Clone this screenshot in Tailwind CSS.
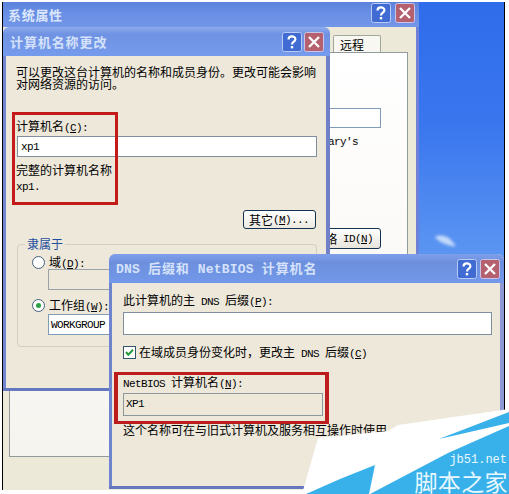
<!DOCTYPE html>
<html lang="zh-CN">
<head>
<meta charset="utf-8">
<title>计算机名称更改</title>
<script src="https://cdn.jsdelivr.net/npm/@tailwindcss/browser@4"></script>
</head>
<body class="w-[509px] h-[494px] overflow-hidden bg-white">
<svg class="hidden">
  <symbol id="help" viewBox="0 0 20 20"><rect x=".5" y=".5" width="19" height="19" rx="2" fill="#3f6bd3" stroke="#b9cbf5"/><path d="M6.5 7.6C6.5 3.4 13.4 3.5 13.4 7.2C13.4 9.6 10 9.6 10 12.4" fill="none" stroke="#fff" stroke-width="2.2"/><rect x="8.8" y="14" width="2.4" height="2.4" fill="#fff"/></symbol>
  <symbol id="close" viewBox="0 0 20 20"><rect x=".5" y=".5" width="19" height="19" rx="2" fill="#b4606e" stroke="#c9c4e8"/><path d="M5 5L15 15M15 5L5 15" fill="none" stroke="#fff" stroke-width="2.3"/></symbol>
</svg>
<div class="relative w-[509px] h-[494px] overflow-hidden text-black text-[12px] leading-[12px] whitespace-nowrap font-['Noto_Sans_CJK_SC',sans-serif]">

  <!-- desktop -->
  <div class="absolute left-[2px] top-[2px] w-[503px] h-[409px] border-r border-black bg-linear-to-b from-[#2f6ceb] via-[#3a76ee] via-30% to-[#5f98f2] to-65%">
    <svg class="absolute left-[428px] top-[228px] w-[32px] h-[22px] blur-[1.5px]" viewBox="0 0 32 22"><path d="M5 7C9 4 18 6 21 10L26 16C20 17 8 12 5 7Z" fill="#c3dafa"/></svg>
  </div>

  <!-- system properties -->
  <section class="absolute left-[2px] top-[2px] w-[417px] h-[488px] border-l border-black bg-[#ece9d8] flex flex-col">
    <header class="h-[25px] shrink-0 flex items-center pl-[5px] pr-[4px] gap-[4px] bg-linear-to-b from-[#5c83db] via-[#6a90e6] to-[#7396e8]">
      <h1 class="flex-1 text-[13px] tracking-[0.7px] font-bold text-[#dbe6fb]">系统属性</h1>
      <svg class="size-[20px] mb-[3px]"><use href="#help"/></svg>
      <svg class="size-[20px] mb-[3px]"><use href="#close"/></svg>
    </header>
    <div class="flex-1 flex flex-col pl-[6px] pr-[8px] pt-[8px] border-r-[3px] border-[#7080d8]">
      <div class="flex justify-end pr-[27px] h-[17px]">
        <div class="w-[48px] border border-b-0 border-[#a3a89c] rounded-t-[2px] bg-[#f8f7f1] pl-[6px] pt-[3px]">远程</div>
      </div>
      <div class="h-[405px] border border-[#919b9c] bg-linear-to-b from-white to-[#f6f4ef] flex flex-col items-end pr-[26px] pt-[55px]">
        <div class="w-[120px] h-[20px] border border-[#7f9db9] bg-white"></div>
        <div class="mt-[8px] mr-[23px] h-[12px] font-['Liberation_Mono',monospace] text-[11px] tracking-[-0.6px]">primary's</div>
        <div class="mt-[80px] w-[100px] h-[21px] border border-[#12324f] rounded-[3px] bg-linear-to-b from-white to-[#e6e4db] flex items-center justify-end pr-[7px]">网络&nbsp;<span class="pl-[3px] font-['Liberation_Mono',monospace] text-[11px] tracking-[-0.6px]">ID(<u>N</u>)</span></div>
      </div>
    </div>
  </section>

  <!-- computer name changes -->
  <section class="absolute left-[3px] top-[27px] w-[327px] h-[364px] rounded-t-[6px] bg-[#ece9d8] border-b-[3px] border-[#6477bf] flex flex-col overflow-hidden">
    <header class="h-[29px] shrink-0 flex items-center pl-[7px] pr-[6px] gap-[2px] bg-linear-to-b from-[#8dabee] via-[#7092e2] via-25% to-[#759bed]">
      <h2 class="flex-1 text-[13px] tracking-[0.9px] font-bold text-[#d5e2fa]">计算机名称更改</h2>
      <svg class="size-[20px] mt-px"><use href="#help"/></svg>
      <svg class="size-[20px] mt-px"><use href="#close"/></svg>
    </header>
    <div class="flex-1 border-l-[3px] border-r-[4px] border-l-[#7187d2] border-r-[#7080c8] pl-[10px] pr-[9px] pt-[10px] bg-[#ede8da]">
      <p class="h-[24px]">可以更改这台计算机的名称和成员身份。更改可能会影响<br>对网络资源的访问。</p>
      <label class="block h-[12px] mt-[30px]">计算机名<span class="font-['Liberation_Mono',monospace] text-[11px] leading-[10px] tracking-[-0.6px]">(<u>C</u>):</span></label>
      <div class="mt-[4px] ml-px w-[300px] h-[21px] border border-[#7f8f9f] bg-white pl-[3px] pt-[4px] font-['Liberation_Mono',monospace] text-[11px] tracking-[-0.6px]">xp1</div>
      <p class="mt-[7px] h-[12px]">完整的计算机名称</p>
      <p class="mt-[5px] h-[12px] font-['Liberation_Mono',monospace] text-[11px] tracking-[-0.6px]">xp1.</p>
      <div class="mt-[17px] ml-[227px] w-[73px] h-[19px] border border-[#12324f] rounded-[3px] bg-linear-to-b from-white to-[#ebe9e0] flex items-center pl-[5px]">其它<span class="font-['Liberation_Mono',monospace] text-[11px] tracking-[-0.6px]">(<u>M</u>)...</span></div>
      <fieldset class="mt-[9px] ml-px w-[300px] h-[109px] border border-[#d0d0bf] rounded-[4px] pl-[14px]">
        <legend class="ml-[-7px] px-[2px] h-[12px] text-[#1d4f9f]">隶属于</legend>
        <div class="flex items-center gap-[4px] h-[13px] mt-[6px]"><span class="size-[13px] rounded-full border border-[#47617c] bg-white"></span><span>域<span class="font-['Liberation_Mono',monospace] text-[11px] leading-[10px] tracking-[-0.6px]">(<u>D</u>):</span></span></div>
        <div class="ml-[16px] w-[260px] h-[21px] border border-[#9aa4a8]"></div>
        <div class="flex items-center gap-[4px] h-[13px] mt-[9px]"><span class="size-[13px] rounded-full border border-[#47617c] bg-white flex items-center justify-center"><span class="size-[5px] rounded-full bg-[#2fa046]"></span></span><span>工作组<span class="font-['Liberation_Mono',monospace] text-[11px] leading-[10px] tracking-[-0.6px]">(<u>W</u>):</span></span></div>
        <div class="ml-[16px] mt-[2px] w-[260px] h-[21px] border border-[#7f9db9] bg-white pl-[2px] pt-[4px] font-['Liberation_Mono',monospace] text-[11px] tracking-[-0.6px]">WORKGROUP</div>
      </fieldset>
    </div>
  </section>
  <div class="absolute left-[12px] top-[112px] w-[106px] h-[93px] border-[3px] border-[#c41a1a]"></div>

  <!-- DNS suffix and NetBIOS name -->
  <section class="absolute left-[109px] top-[254px] w-[395px] h-[235px] rounded-t-[6px] border-b-[3px] border-[#6477bf] bg-[#ede8da] flex flex-col overflow-hidden">
    <header class="h-[29px] shrink-0 flex items-center pl-[7px] pr-[4px] gap-[3px] bg-linear-to-b from-[#7f9fea] via-[#6c8fdd] via-30% to-[#7499ea]">
      <h2 class="flex-1 text-[13px] tracking-[0.9px] font-bold text-[#d5e2fa]"><span class="font-['Liberation_Mono',monospace] tracking-[0.2px]">DNS </span>后缀和<span class="font-['Liberation_Mono',monospace] tracking-[0.2px]"> NetBIOS </span>计算机名</h2>
      <svg class="size-[20px] mt-px"><use href="#help"/></svg>
      <svg class="size-[20px] mt-px"><use href="#close"/></svg>
    </header>
    <div class="flex-1 border-l-[3px] border-r-[4px] border-l-[#6f84cf] border-r-[#8d98d4] pl-[11px] pt-[11px]">
      <label class="block h-[12px]">此计算机的主<span class="font-['Liberation_Mono',monospace] text-[11px] leading-[10px] tracking-[-0.6px]"> DNS </span>后缀<span class="font-['Liberation_Mono',monospace] text-[11px] leading-[10px] tracking-[-0.6px]">(<u>P</u>):</span></label>
      <div class="mt-[6px] w-[369px] h-[23px] border border-[#7f8f9f] bg-white"></div>
      <div class="mt-[11px] h-[13px] flex items-center gap-[3px]">
        <svg class="size-[13px]" viewBox="0 0 13 13"><rect x=".5" y=".5" width="12" height="12" fill="#fff" stroke="#35536f"/><path d="M3 6L5.3 8.7L10 3.7" fill="none" stroke="#269a3c" stroke-width="2"/></svg>
        <span>在域成员身份变化时，更改主<span class="font-['Liberation_Mono',monospace] text-[11px] leading-[10px] tracking-[-0.6px]"> DNS </span>后缀<span class="font-['Liberation_Mono',monospace] text-[11px] leading-[10px] tracking-[-0.6px]">(<u>C</u>)</span></span>
      </div>
      <label class="block h-[12px] mt-[17px]"><span class="font-['Liberation_Mono',monospace] text-[11px] leading-[10px] tracking-[-0.6px]">NetBIOS </span>计算机名<span class="font-['Liberation_Mono',monospace] text-[11px] leading-[10px] tracking-[-0.6px]">(<u>N</u>):</span></label>
      <div class="mt-[5px] w-[200px] h-[23px] border border-[#8d989c] pl-[2px] pt-[4px] font-['Liberation_Mono',monospace] text-[11px] tracking-[-0.6px]">XP1</div>
      <p class="mt-[8px]">这个名称可在与旧式计算机及服务相互操作时使用</p>
    </div>
  </section>
  <div class="absolute left-[114px] top-[372px] w-[215px] h-[52px] border-[4px] border-t-[3px] border-b-[3px] border-[#bd1c1c]"></div>

  <!-- site watermark -->
  <div class="absolute left-[300px] top-[400px] w-[209px] h-[94px]">
    <svg class="absolute inset-0 size-full" viewBox="300 400 209 94">
      <path d="M509 409L398 425L388 431L318 438L302 494H509Z" fill="#fff"/>
      <path d="M306 494L340 479L375 465L369 494Z" fill="#38b1ea"/>
      <path d="M439 439L509 412V423Z" fill="#38b1ea"/>
      <path d="M370 494L448 453L509 426V494Z" fill="#38b1ea"/>
    </svg>
    <div class="absolute right-[1px] bottom-[1px] flex flex-col items-end text-[#e9f8ff]">
      <span class="h-[15px] mr-px font-['Liberation_Mono',monospace] text-[12px] leading-[13px]">jb51.net</span>
      <span class="text-[23px] leading-[24px] tracking-[0.4px]">脚本之家</span>
    </div>
  </div>
</div>
</body>
</html>
